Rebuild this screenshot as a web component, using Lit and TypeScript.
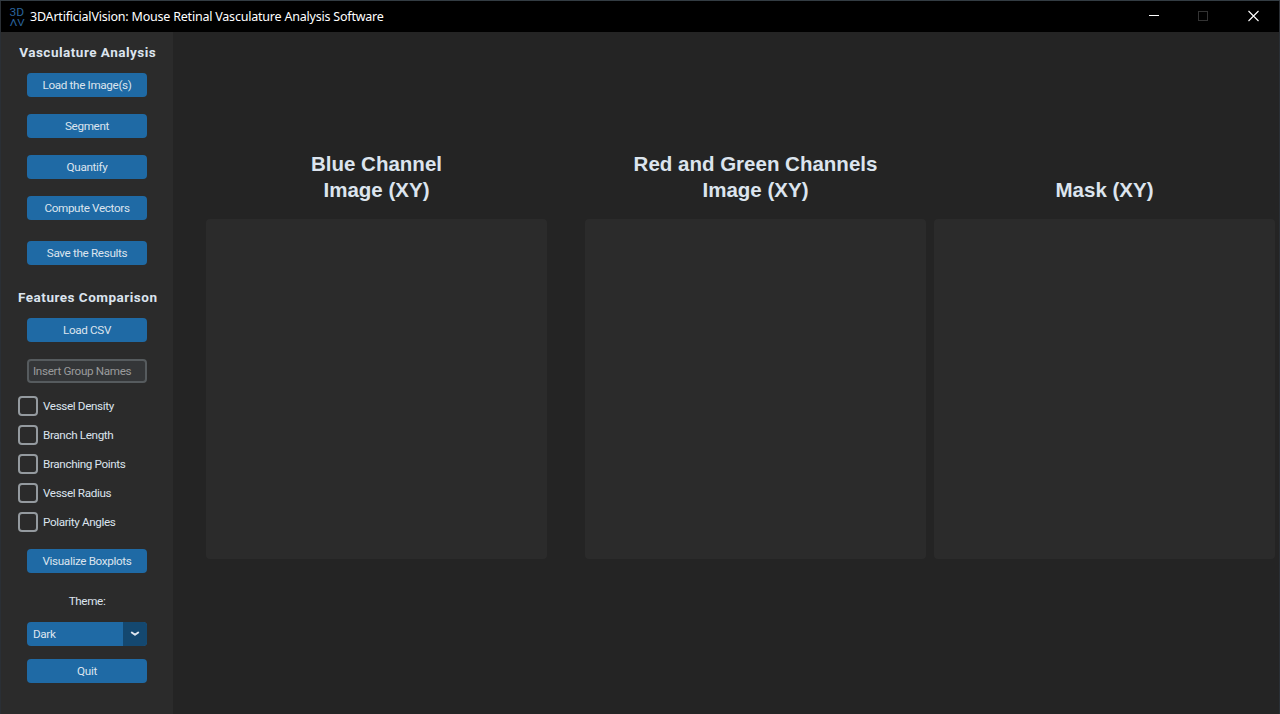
import { LitElement, html, css } from "lit";
import { customElement } from "lit/decorators.js";

@customElement("app-root")
export class AppRoot extends LitElement {
  static styles = css`
    :host { display: block; }
    * { box-sizing: border-box; }
    .window {
      width: 1280px; height: 714px; overflow: hidden;
      display: grid; grid-template-rows: 31px 1fr;
      padding: 1px 1px 0 1px;
      background: linear-gradient(#333c43 0 1px, #2a2f35 1px);
      color: #dce4ee; font: 11.7px/18px Roboto, sans-serif; letter-spacing: -0.36px;
    }
    .titlebar { background: #000; display: flex; align-items: center; padding-left: 8px; }
    .logo { width: 17px; height: 24px; display: block; }
    .logo text { font: 8px Roboto, sans-serif; letter-spacing: 0; fill: #2a639c; }
    .title { color: #fff; font: 12.5px/18px "Noto Sans", "Open Sans", sans-serif; margin-left: 4px; flex: 1; white-space: nowrap; letter-spacing: -0.21px; }
    .controls { display: flex; }
    .controls svg { width: 50px; height: 31px; display: block; }
    .body { display: grid; grid-template-columns: 172px 1fr; background: #242424; min-height: 0; }
    .sidebar { background: #2b2b2b; display: flex; flex-direction: column; align-items: center; padding-top: 11px; }
    h2 { margin: 0; font: 700 13.5px/18px Roboto, sans-serif; letter-spacing: 0.5px; white-space: nowrap; padding-left: 1.5px; }
    .actions { display: grid; gap: 17px; margin-top: 12px; }
    button, .entry, .select {
      width: 120px; height: 24px; border: 0; padding: 0; border-radius: 4px;
      background: #1f6aa5; color: #dce4ee; font: 11.7px/24px Roboto, sans-serif; text-align: center;
      letter-spacing: -0.34px; display: block; white-space: nowrap; overflow: hidden;
    }
    .save { margin-top: 21px; }
    .features { margin-top: 23px; }
    .csv { margin-top: 12px; }
    .entry { margin-top: 17px; background: #343638; border: 2px solid #565b5e; color: #9a9b9c; line-height: 20px; text-align: left; padding-left: 4px; }
    .checks { align-self: stretch; padding-left: 17px; margin-top: 8px; display: grid; grid-auto-rows: 29px; }
    .check { display: flex; align-items: center; gap: 5px; }
    .box { width: 20px; height: 20px; border: 2px solid #949a9f; border-radius: 4px; }
    .boxplots { margin-top: 13px; }
    .theme { margin-top: 19px; }
    .select { margin-top: 12px; display: grid; grid-template-columns: 96px 24px; text-align: left; }
    .value { padding-left: 6px; }
    .arrow { background: #144870; display: grid; place-items: center; }
    .quit { margin-top: 13px; }
    .main { display: grid; grid-template-columns: 379px 349px 341px; padding: 119px 0 0 33px; align-content: start; }
    .view { display: grid; grid-template-rows: 52px 340px; row-gap: 16px; }
    h1 { margin: 0; align-self: end; width: 341px; text-align: center; font: 700 20.5px/26px "Liberation Sans", sans-serif; letter-spacing: 0; white-space: pre-line; }
    .canvas { width: 341px; background: #2b2b2b; border-radius: 4px; }
  `;

  private features = ["Vessel Density", "Branch Length", "Branching Points", "Vessel Radius", "Polarity Angles"];
  private actions = ["Load the Image(s)", "Segment", "Quantify", "Compute Vectors"];
  private views = ["Blue Channel\nImage (XY)", "Red and Green Channels\nImage (XY)", "Mask (XY)"];

  render() {
    return html`
      <div class="window">
        <div class="titlebar">
          <svg class="logo" viewBox="0 -2 17 24">
            <text transform="translate(0.4 9) scale(1.5 1.3)">3D</text>
            <text transform="translate(0.7 18.9) scale(1.45 1.2)">ΛV</text>
          </svg>
          <div class="title">3DArtificialVision: Mouse Retinal Vasculature Analysis Software</div>
          <div class="controls">
            <svg viewBox="0 0 50 31"><path d="M20 14.5h10" stroke="#fff" fill="none" /></svg>
            <svg viewBox="0 0 50 31"><rect x="19.5" y="10.5" width="9" height="9" stroke="#333" fill="none" /></svg>
            <svg viewBox="0 0 50 31"><path d="M19.5 10l10 10M29.5 10L19.5 20" stroke="#fff" stroke-width="1.1" fill="none" /></svg>
          </div>
        </div>
        <div class="body">
          <div class="sidebar">
            <h2>Vasculature Analysis</h2>
            <div class="actions">${this.actions.map((a) => html`<button>${a}</button>`)}</div>
            <button class="save">Save the Results</button>
            <h2 class="features">Features Comparison</h2>
            <button class="csv">Load CSV</button>
            <div class="entry">Insert Group Names</div>
            <div class="checks">
              ${this.features.map((f) => html`<div class="check"><span class="box"></span><span>${f}</span></div>`)}
            </div>
            <button class="boxplots">Visualize Boxplots</button>
            <div class="theme">Theme:</div>
            <div class="select">
              <span class="value">Dark</span>
              <span class="arrow"><svg width="10" height="6" viewBox="0 0 10 6"><path d="M1.8 1.5L5 3.8L8.2 1.5" fill="none" stroke="#dce4ee" stroke-width="2" stroke-linecap="round" stroke-linejoin="round" /></svg></span>
            </div>
            <button class="quit">Quit</button>
          </div>
          <div class="main">
            ${this.views.map((v) => html`<div class="view"><h1>${v}</h1><div class="canvas"></div></div>`)}
          </div>
        </div>
      </div>
    `;
  }
}
